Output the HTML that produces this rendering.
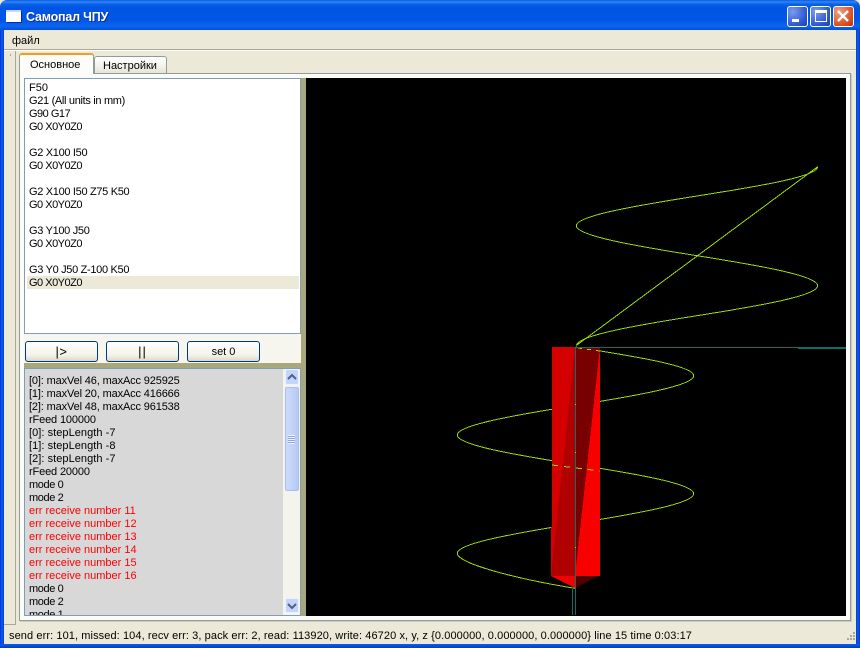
<!DOCTYPE html>
<html><head><meta charset="utf-8"><style>
html,body{margin:0;padding:0;background:#fff}
#w{position:relative;width:860px;height:648px;overflow:hidden;background:#ece9d8;font:11px "Liberation Sans","Noto Sans CJK SC",sans-serif;color:#000}
#w div{position:absolute;box-sizing:border-box}
.t{white-space:nowrap;line-height:13px;height:13px}
.e{letter-spacing:-.32px}
.g{letter-spacing:-.5px}
.l{letter-spacing:-.14px}
.m{letter-spacing:-.4px}
.s{letter-spacing:.05px}
.r{color:#f00}
.b{width:73px;height:21px;top:341px;border:1px solid #003c74;border-radius:3px;background:linear-gradient(#fff,#f3f2ea 70%,#dcd8c8);text-align:center;line-height:19px;font-size:11px}
.wb{top:6px;width:21px;height:21px;border:1px solid #fff;border-radius:3px;background:radial-gradient(circle at 25% 25%,#7a9cf0,#2a55d0 70%,#1a40b8)}
</style></head><body><div id="w">
<!-- title bar -->
<div style="left:0;top:0;width:860px;height:30px;border-radius:7px 7px 0 0;background:linear-gradient(#0a5be0 0,#2f86f8 2px,#0a62e8 4px,#0055e5 8px,#0256e6 20px,#0a66f0 26px,#0450d8 30px)"></div>
<div style="left:0;top:30px;width:4px;height:618px;background:linear-gradient(90deg,#0831d9,#0a5cf0 50%,#0042c8)"></div>
<div style="left:856px;top:30px;width:4px;height:618px;background:linear-gradient(90deg,#0042c8,#0a5cf0 50%,#0831d9)"></div>
<div style="left:0;top:644px;width:860px;height:4px;background:linear-gradient(#0a5cf0,#0040c0)"></div>
<div style="left:6px;top:10px;width:15px;height:12px;background:#fff;border-top:2px solid #c8d8f8;box-shadow:1px 1px 0 #0030a0"></div>
<div class="t" style="left:26px;top:10px;font-size:12.5px;line-height:15px;height:15px;font-weight:bold;color:#fff;letter-spacing:-.2px;text-shadow:1px 1px 0 #0a2fa0">Самопал ЧПУ</div>
<div class="wb" style="left:787px"><div style="left:4px;top:12px;width:7px;height:3px;background:#fff"></div></div>
<div class="wb" style="left:810px"><div style="left:4px;top:3px;width:12px;height:12px;border:1px solid #fff;border-top:3px solid #fff"></div></div>
<div class="wb" style="left:833px;background:radial-gradient(circle at 25% 25%,#f0a080,#d84c20 70%,#b83010)"><svg width="19" height="19" style="position:absolute;left:0;top:0"><path d="M4 4L14 14M14 4L4 14" stroke="#fff" stroke-width="2.4"/></svg></div>
<!-- menu -->
<div class="t" style="left:12px;top:35px">файл</div>
<div style="left:4px;top:49px;width:852px;height:1px;background:#aca899"></div>
<div style="left:4px;top:50px;width:852px;height:1px;background:#fff"></div>
<!-- side bar -->
<div style="left:4px;top:51px;width:12px;height:574px;border-right:1px solid #aca899;border-bottom:1px solid #aca899"></div>
<div style="left:10px;top:54px;width:1px;height:2px;background:#aca899"></div>
<!-- tabs -->
<div style="left:94px;top:56px;width:73px;height:18px;border:1px solid #919b9c;border-bottom:0;border-radius:3px 3px 0 0;background:linear-gradient(#fff,#f2f1e8 60%,#e4e1d2)"></div>
<div class="t" style="left:103px;top:60px">Настройки</div>
<div style="left:19px;top:73px;width:832px;height:548px;border:1px solid #919b9c;background:#fbfbf8;box-shadow:1px 1px 0 #d0cdbd"></div>
<div style="left:19px;top:53px;width:75px;height:21px;border:1px solid #919b9c;border-bottom:0;border-top:2px solid #f0a020;border-radius:3px 3px 0 0;background:#fcfcfa"></div>
<div class="t" style="left:30px;top:59px">Основное</div>
<!-- splitter background -->
<div style="left:301px;top:78px;width:5px;height:538px;background:#a8a87c"></div>
<div style="left:24px;top:363px;width:282px;height:5px;background:#a8a87c"></div>
<div style="left:24px;top:333px;width:277px;height:30px;background:#f6f5ee"></div>
<!-- editor -->
<div style="left:24px;top:78px;width:277px;height:256px;border:1px solid #7f9db9;background:#fff"></div>
<div style="left:27px;top:276px;width:272px;height:13px;background:#ece9d8"></div>
<div class="t" style="left:29px;top:82px">F50</div>
<div class="t e" style="left:29px;top:95px">G21 (All units in mm)</div>
<div class="t e" style="left:29px;top:108px;letter-spacing:-.5px">G90 G17</div>
<div class="t g" style="left:29px;top:121px">G0 X0Y0Z0</div>
<div class="t e" style="left:29px;top:147px">G2 X100 I50</div>
<div class="t g" style="left:29px;top:160px">G0 X0Y0Z0</div>
<div class="t e" style="left:29px;top:186px">G2 X100 I50 Z75 K50</div>
<div class="t g" style="left:29px;top:199px">G0 X0Y0Z0</div>
<div class="t e" style="left:29px;top:225px">G3 Y100 J50</div>
<div class="t g" style="left:29px;top:238px">G0 X0Y0Z0</div>
<div class="t e" style="left:29px;top:264px">G3 Y0 J50 Z-100 K50</div>
<div class="t g" style="left:29px;top:277px">G0 X0Y0Z0</div>
<!-- buttons -->
<div class="b" style="left:25px;font-size:13px;letter-spacing:.5px">|&gt;</div>
<div class="b" style="left:106px;font-size:13px;letter-spacing:1px">||</div>
<div class="b" style="left:187px;line-height:21px">set 0</div>
<!-- log -->
<div style="left:24px;top:368px;width:277px;height:248px;border:1px solid #7f9db9;background:#d8d8d8;overflow:hidden">
<div class="t l" style="left:4px;top:6px">[0]: maxVel 46, maxAcc 925925</div>
<div class="t l" style="left:4px;top:19px">[1]: maxVel 20, maxAcc 416666</div>
<div class="t l" style="left:4px;top:32px">[2]: maxVel 48, maxAcc 961538</div>
<div class="t l" style="left:4px;top:45px">rFeed 100000</div>
<div class="t s" style="left:4px;top:58px">[0]: stepLength -7</div>
<div class="t s" style="left:4px;top:71px">[1]: stepLength -8</div>
<div class="t s" style="left:4px;top:84px">[2]: stepLength -7</div>
<div class="t l" style="left:4px;top:97px">rFeed 20000</div>
<div class="t m" style="left:4px;top:110px">mode 0</div>
<div class="t m" style="left:4px;top:123px">mode 2</div>
<div class="t r" style="left:4px;top:136px">err receive number 11</div>
<div class="t r" style="left:4px;top:149px">err receive number 12</div>
<div class="t r" style="left:4px;top:162px">err receive number 13</div>
<div class="t r" style="left:4px;top:175px">err receive number 14</div>
<div class="t r" style="left:4px;top:188px">err receive number 15</div>
<div class="t r" style="left:4px;top:201px">err receive number 16</div>
<div class="t m" style="left:4px;top:214px">mode 0</div>
<div class="t m" style="left:4px;top:227px">mode 2</div>
<div class="t m" style="left:4px;top:240px">mode 1</div>
</div>
<!-- scrollbar -->
<div style="left:283px;top:369px;width:17px;height:246px;background:#f4f4ec"></div>
<div style="left:285px;top:369px;width:14px;height:16px;border:1px solid #eef2fd;border-radius:2px;background:#c4d4fa"><svg width="12" height="14" style="position:absolute;left:0;top:0"><path d="M2 9L6 5L10 9" fill="none" stroke="#4d6185" stroke-width="2"/></svg></div>
<div style="left:285px;top:387px;width:14px;height:104px;border:1px solid #a8c0ee;border-radius:2px;background:linear-gradient(90deg,#ccd9fb,#c2d2f9 50%,#b6c9f4)"></div>
<div style="left:288px;top:435px;width:7px;height:9px;background:repeating-linear-gradient(#eef2fd 0 1px,#8ca8e4 1px 2px)"></div>
<div style="left:285px;top:598px;width:14px;height:15px;border:1px solid #eef2fd;border-radius:2px;background:#c4d4fa"><svg width="12" height="13" style="position:absolute;left:0;top:0"><path d="M2 5L6 9L10 5" fill="none" stroke="#4d6185" stroke-width="2"/></svg></div>
<!-- canvas -->
<div style="left:306px;top:78px;width:540px;height:538px;background:#000;overflow:hidden">
<svg width="540" height="538" viewBox="306 78 540 538" style="position:absolute;left:0;top:0">
<g fill="none" stroke="#99dd00" stroke-width="1" shape-rendering="crispEdges">
<path d="M577 345L817.7 166.7"/>
<path d="M576.5 345.7C576.5 335.7 633.8 325.7 697 315.7C760.2 305.7 817.7 295.7 817.7 285.7C817.7 275.7 760.2 265.7 697 255.7C633.8 245.7 576.3 235.7 576.3 225.7C576.3 215.9 633.8 206 697 196C760.2 186 817.7 176.5 817.7 166.7"/>
<path d="M575.5 347C637.4 356.8 693.7 365.9 693.7 375.7C693.7 385.6 637.4 395.5 575.5 405.4C513.6 415.3 457.3 425.2 457.3 435C457.3 444.9 513.6 454.7 575.5 464.4C637.4 474.1 693.7 483.8 693.7 493.7C693.7 503.6 637.4 513.5 575.5 523.5C513.6 533.5 457.3 543.4 457.3 553.3C457.3 563.2 513.6 578.4 575 588.3"/>
</g>
<g shape-rendering="crispEdges">
<path d="M552 347H600V576H551V527H552Z" fill="#d40000"/>
<path d="M575 347V576H551Z" fill="#b00000"/>
<path d="M600 347V576H575Z" fill="#f80000"/>
<path d="M575 347H600L575 576Z" fill="#780000"/>
<path d="M551 576H575V588Z" fill="#f40000"/>
<path d="M575 576H598L575 588Z" fill="#500000"/>
<path d="M552 465L600 471" fill="none" stroke="#99dd00" stroke-dasharray="6 6"/>
<path d="M578 348L600 351" fill="none" stroke="#99dd00" stroke-dasharray="4 5"/>
<path d="M575.5 347V615M572.5 588V615M575 347.5H846" fill="none" stroke="#0f6e68"/>
<path d="M798 348.5H846" fill="none" stroke="#0f6e68"/>
<path d="M575 404h1v1h-1zM575 452h1v1h-1zM575 547h1v1h-1z" fill="#99dd00"/>
</g>
</svg></div>
<!-- status -->
<div class="t" style="left:9px;top:630px;letter-spacing:.09px">send err: 101, missed: 104, recv err: 3, pack err: 2, read: 113920, write: 46720 x, y, z {0.000000, 0.000000, 0.000000} line 15 time 0:03:17</div>
<svg width="14" height="14" style="position:absolute;left:842px;top:630px"><path d="M11 2h2v2h-2zM8 5h2v2H8zM11 5h2v2h-2zM5 8h2v2H5zM8 8h2v2H8zM11 8h2v2h-2z" fill="#aca899"/></svg>
</div></body></html>
